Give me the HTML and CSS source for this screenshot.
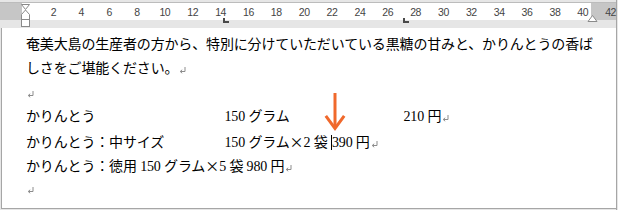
FILE: index.html
```html
<!DOCTYPE html>
<html lang="ja">
<head>
<meta charset="utf-8">
<title>かりんとう</title>
<link rel="stylesheet" href="styles.css">
</head>
<body>
<div class="window">
  <div class="topbar"></div>
  <div class="ruler">
    <div class="ruler-nums">
      <span>2</span><span>4</span><span>6</span><span>8</span><span>10</span><span>12</span><span>14</span><span>16</span><span>18</span><span>20</span><span>22</span><span>24</span><span>26</span><span>28</span><span>30</span><span>32</span><span>34</span><span>36</span><span>38</span><span>40</span><span>42</span>
    </div>
  </div>
  <div class="band"></div>
  <div class="page">
    <p class="line">奄美大島の生産者の方から、特別に分けていただいている黒糖の甘みと、かりんとうの香ば</p>
    <p class="line">しさをご堪能ください。<svg class="ret" viewBox="0 0 7 6" width="7" height="6"><path d="M6 0V4.5H1.5M3.2 2.8L1.2 4.5L3.2 6.2"/></svg></p>
    <p class="line"><svg class="ret" viewBox="0 0 7 6" width="7" height="6"><path d="M6 0V4.5H1.5M3.2 2.8L1.2 4.5L3.2 6.2"/></svg></p>
    <p class="line"><span class="col c1">かりんとう</span><span class="col c2">150 グラム</span>210 円<svg class="ret" viewBox="0 0 7 6" width="7" height="6"><path d="M6 0V4.5H1.5M3.2 2.8L1.2 4.5L3.2 6.2"/></svg></p>
    <p class="line"><span class="col c1">かりんとう：中サイズ</span>150 グラム<span class="times">×</span>2 袋 <span class="caret"></span>390 円<svg class="ret" viewBox="0 0 7 6" width="7" height="6"><path d="M6 0V4.5H1.5M3.2 2.8L1.2 4.5L3.2 6.2"/></svg></p>
    <p class="line">かりんとう：徳用 150 グラム<span class="times">×</span>5 袋 980 円<svg class="ret" viewBox="0 0 7 6" width="7" height="6"><path d="M6 0V4.5H1.5M3.2 2.8L1.2 4.5L3.2 6.2"/></svg></p>
    <p class="line"><svg class="ret" viewBox="0 0 7 6" width="7" height="6"><path d="M6 0V4.5H1.5M3.2 2.8L1.2 4.5L3.2 6.2"/></svg></p>
    <svg class="arrow" viewBox="0 0 20 38" width="20" height="38">
      <path d="M10 0V34" />
      <path d="M0.8 22.8L10 35.5L19.2 22.8" />
    </svg>
  </div>
  <svg class="ruler-marks" viewBox="0 0 617 30" width="617" height="30">
    <g class="marker">
      <polygon points="21.5,4.5 29.5,4.5 25.5,9.5"/>
      <polygon points="25.5,10 29.5,14.5 29.5,19.5 21.5,19.5 21.5,14.5"/>
      <rect x="21.5" y="19.5" width="8" height="7"/>
      <polygon points="588,21.5 592.5,15.5 597,21.5"/>
    </g>
    <g class="tabs">
      <rect x="223" y="18" width="2" height="5"/>
      <rect x="223" y="21" width="6" height="2"/>
      <rect x="403" y="18" width="2" height="5"/>
      <rect x="403" y="21" width="6" height="2"/>
    </g>
  </svg>
</div>
</body>
</html>
```

FILE: styles.css
```css
* {
  box-sizing: border-box;
}

html,
body {
  margin: 0;
  padding: 0;
}

body {
  width: 618px;
  height: 210px;
  overflow: hidden;
  background: #e6e6e6;
}

.window {
  position: relative;
  width: 617px;
  height: 210px;
  border-right: 1px solid #a6a6a6;
}

.topbar {
  height: 3px;
  border-bottom: 1px solid #bcbcbc;
}

.ruler {
  height: 17px;
  background: linear-gradient(to right, #c6c6c6 0 22px, #ffffff 22px 591px, #c6c6c6 591px);
}

.ruler-nums {
  display: flex;
  padding-left: 39.5px;
  padding-top: 2px;
  font-family: "Liberation Sans", Arial, sans-serif;
  font-size: 10.5px;
  line-height: 15px;
  letter-spacing: -0.4px;
  color: #444444;
}

.ruler-nums span {
  flex: 0 0 27.86px;
  text-align: center;
}

.band {
  height: 8px;
}

.page {
  position: relative;
  margin-left: 1px;
  height: 181px;
  padding: 5px 0 7px 24px;
  background: #ffffff;
  border-left: 1px solid #a6a6a6;
  border-bottom: 1px solid #a6a6a6;
  font-family: "Liberation Serif", "Noto Sans CJK JP", serif;
  font-size: 14px;
  line-height: 24px;
  letter-spacing: -0.15px;
  color: #000000;
  white-space: nowrap;
}

.line {
  margin: 0;
  height: 24px;
}

.col {
  display: inline-block;
}

.c1 {
  width: 198.5px;
}

.c2 {
  width: 179px;
}

.times {
  display: inline-block;
  width: 14px;
  text-align: center;
  font-family: "Noto Sans CJK JP", sans-serif;
}

.caret {
  display: inline-block;
  width: 1px;
  height: 15px;
  background: #000000;
  vertical-align: -3px;
}

.ret {
  margin-left: 1px;
  vertical-align: baseline;
  overflow: visible;
}

.ret path {
  fill: none;
  stroke: #8c8c8c;
  stroke-width: 1;
}

.arrow {
  position: absolute;
  left: 322.5px;
  top: 65px;
  overflow: visible;
}

.arrow path {
  fill: none;
  stroke: #f0692c;
  stroke-width: 3;
  stroke-linejoin: miter;
}

.ruler-marks {
  position: absolute;
  left: 0;
  top: 0;
  pointer-events: none;
}

.marker polygon,
.marker rect {
  fill: #ffffff;
  stroke: #8a8a8a;
  stroke-width: 1;
}

.tabs rect {
  fill: #4a4a4a;
}
```
